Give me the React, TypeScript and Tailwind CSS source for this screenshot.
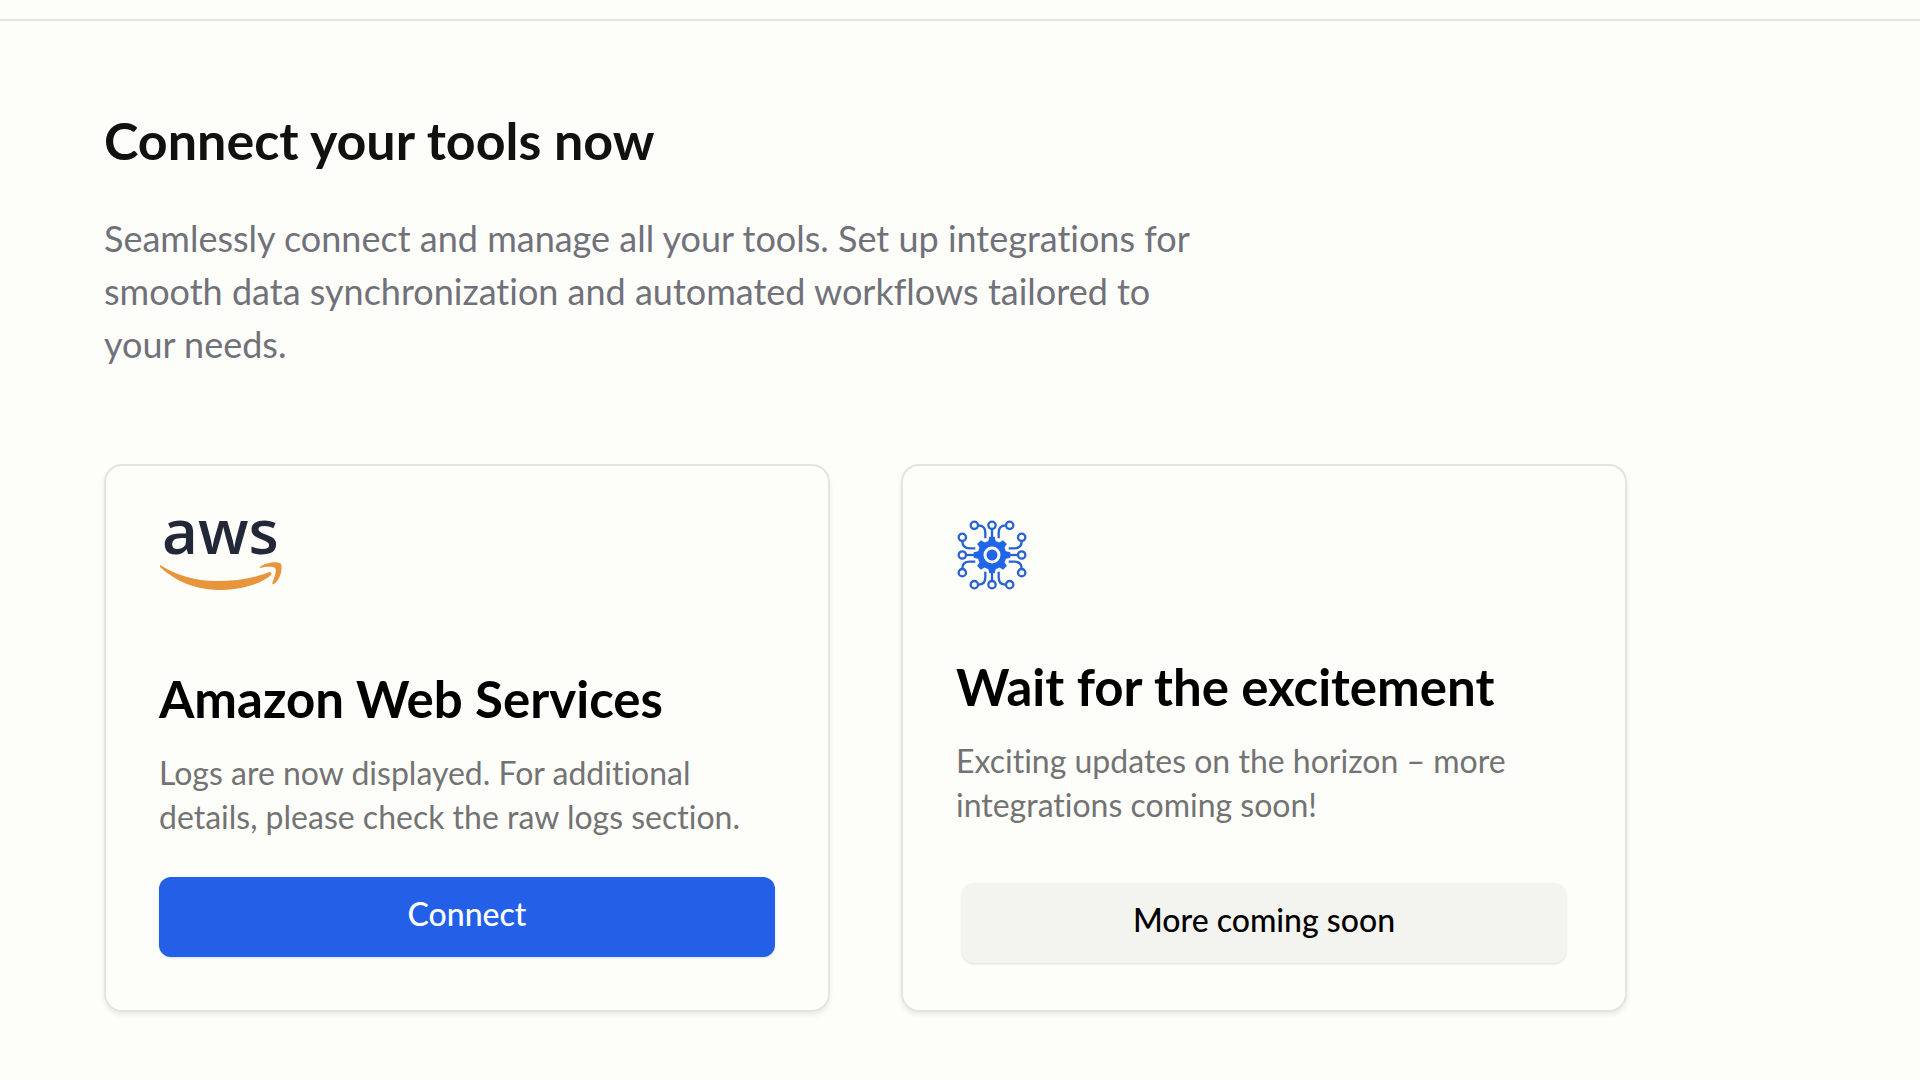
import type { ReactNode } from "react";
import { clsx } from "clsx";

type IntegrationCardProps = {
  logo: ReactNode;
  title: string;
  description: string;
  className?: string;
  children: ReactNode;
};

export default function App() {
  return (
    <div className="min-h-screen bg-[#fdfefa] font-[Lato,sans-serif] [font-variant-ligatures:none]">
      <header className="h-[21px] border-b-2 border-[#e3e4df]" />

      <main className="px-[104px] pt-[83px] pb-[68px]">
        <h1 className="text-[52px] leading-[72px] font-bold text-[#11110f]">Connect your tools now</h1>
        <p className="mt-9 max-w-[1112px] text-[36px] leading-[53px] text-[#71717a]">
          Seamlessly connect and manage all your tools. Set up integrations for smooth data synchronization and
          automated workflows tailored to your needs.
        </p>

        <div className="mt-[93px] grid max-w-[1523px] grid-cols-2 gap-[71px]">
          <IntegrationCard
            logo={<AwsLogo />}
            title="Amazon Web Services"
            description="Logs are now displayed. For additional details, please check the raw logs section."
            className="pt-[18px]"
          >
            <button
              type="button"
              className="mt-[38px] h-20 rounded-xl bg-[#235fe7] pb-1.5 text-[32px] leading-none font-medium text-white shadow-sm"
            >
              Connect
            </button>
          </IntegrationCard>

          <IntegrationCard
            logo={<ChipLogo />}
            title="Wait for the excitement"
            description="Exciting updates on the horizon – more integrations coming soon!"
            className="pt-[53px]"
          >
            <button
              type="button"
              className="mx-1.5 mt-[56px] h-20 rounded-xl bg-[#f3f3f0] pb-1.5 text-[32px] leading-none font-medium text-black shadow-sm"
            >
              More coming soon
            </button>
          </IntegrationCard>
        </div>
      </main>
    </div>
  );
}

function IntegrationCard({ logo, title, description, className, children }: IntegrationCardProps) {
  return (
    <section
      className={clsx(
        "flex flex-col rounded-[18px] border-2 border-[#e3e4df] px-[53px] pb-[47px] shadow-[0_3px_5px_rgba(0,0,0,0.08)]",
        className
      )}
    >
      {logo}
      <h2 className="text-[51px] leading-[64px] font-bold text-black">{title}</h2>
      <p className="mt-5 text-[32px] leading-[44px] text-[#737373]">{description}</p>
      {children}
    </section>
  );
}

function AwsLogo() {
  return (
    <svg viewBox="0 -30 124 110" className="mb-[73px] h-[110px] w-[124px]" role="img" aria-label="AWS">
      <text x="3" y="40" className="fill-[#232838] font-['Open_Sans',sans-serif] text-[62px] font-semibold">
        aws
      </text>
      <path
        d="M1 51 C17 61 36 67 57 67 C78 67 96 64 110 58 C113 58 113 60 111 62 C98 72 78 76 58 76 C35 75 16 67 1 53 Z"
        fill="#e8943a"
      />
      <path
        d="M101 53 C107 48 120 47 122 50 C124 55 121 66 115 70 C113 71 113 69 114 67 C116 62 118 56 116 54 C113 52 106 53 101 54 Z"
        fill="#e8943a"
      />
    </svg>
  );
}

function ChipLogo() {
  return (
    <svg
      viewBox="-108 -108 216 216"
      className="mb-16 size-[72px]"
      fill="none"
      stroke="#2a63cf"
      strokeWidth="7"
      aria-hidden="true"
    >
      {[0, 90, 180, 270].map((angle) => (
        <g key={angle} transform={`rotate(${angle})`}>
          <circle cx="0" cy="-89" r="11" />
          <path d="M0 -77 V-54" />
          <circle cx="53" cy="-89" r="11" />
          <path d="M41 -89 C26 -89 20 -80 20 -67 V-50" />
          <circle cx="-53" cy="-89" r="11" />
          <path d="M-41 -89 C-26 -89 -20 -80 -20 -67 V-50" />
        </g>
      ))}
      <g fill="#2166e8" stroke="none">
        {[0, 45, 90, 135, 180, 225, 270, 315].map((angle) => (
          <path key={angle} d="M-12 -38 L-8 -55 H8 L12 -38 Z" transform={`rotate(${angle})`} />
        ))}
        <circle r="43" />
      </g>
      <circle r="21" stroke="#fdfefa" strokeWidth="9" />
    </svg>
  );
}
